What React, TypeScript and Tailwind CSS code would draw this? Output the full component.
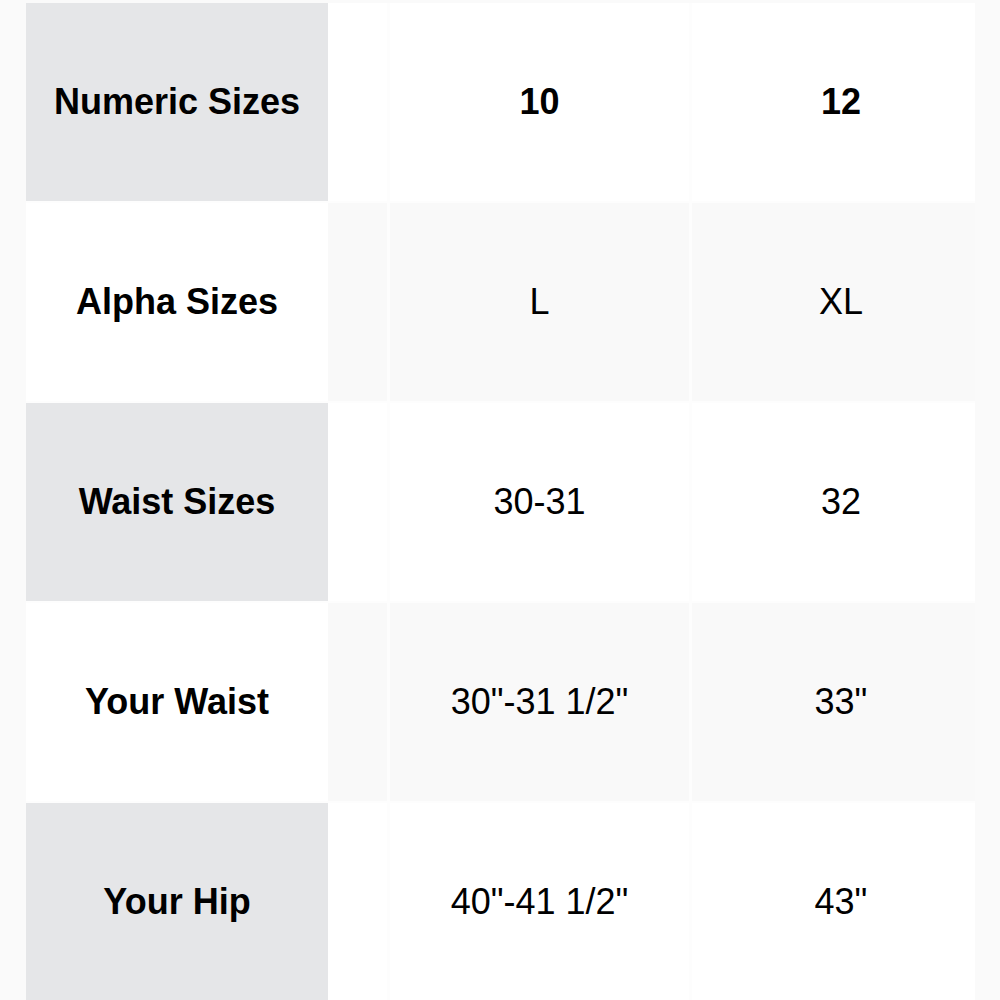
import React from 'react';

type Row = {
  label: string;
  values: string[];
  header?: boolean;
};

const rows: Row[] = [
  { label: 'Numeric Sizes', values: ['8', '10', '12'], header: true },
  { label: 'Alpha Sizes', values: ['M', 'L', 'XL'] },
  { label: 'Waist Sizes', values: ['28-29', '30-31', '32'] },
  { label: 'Your Waist', values: ['28"-29 1/2"', '30"-31 1/2"', '33"'] },
  { label: 'Your Hip', values: ['38"-39 1/2"', '40"-41 1/2"', '43"'] },
];

export default function App() {
  return (
    <div className="relative w-[1000px] h-[1000px] overflow-hidden bg-[#fafafa] pl-[26px] pt-[3px] text-black font-['Liberation_Sans',Arial,sans-serif]">
      <div className="flex flex-col gap-y-[2px] bg-[#fdfdfd] w-[970px]">
        {rows.map((row, i) => {
          const shaded = i % 2 === 0;
          const labelBg = shaded ? 'bg-[#e5e6e8]' : 'bg-white';
          const cellBg = shaded ? 'bg-white' : 'bg-[#f9f9f9]';
          const weight = row.header ? 'font-bold' : 'font-normal';
          return (
            <div key={row.label} className="flex h-[198px]">
              <div className={`${labelBg} w-[302px] shrink-0 flex items-center justify-center text-[36px] font-bold`}>
                {row.label}
              </div>
              {/* column scrolled under the sticky label */}
              <div className={`${cellBg} w-[59px] shrink-0`} />
              <div className={`${cellBg} ml-[3px] w-[299px] shrink-0 flex items-center justify-center text-[36px] ${weight}`}>
                {row.values[1]}
              </div>
              <div className={`${cellBg} ml-[3px] w-[298px] shrink-0 flex items-center justify-center text-[36px] ${weight}`}>
                {row.values[2]}
              </div>
            </div>
          );
        })}
      </div>
      <div className="absolute top-0 right-0 h-full w-[25px] bg-[#fafafa]" />
    </div>
  );
}
